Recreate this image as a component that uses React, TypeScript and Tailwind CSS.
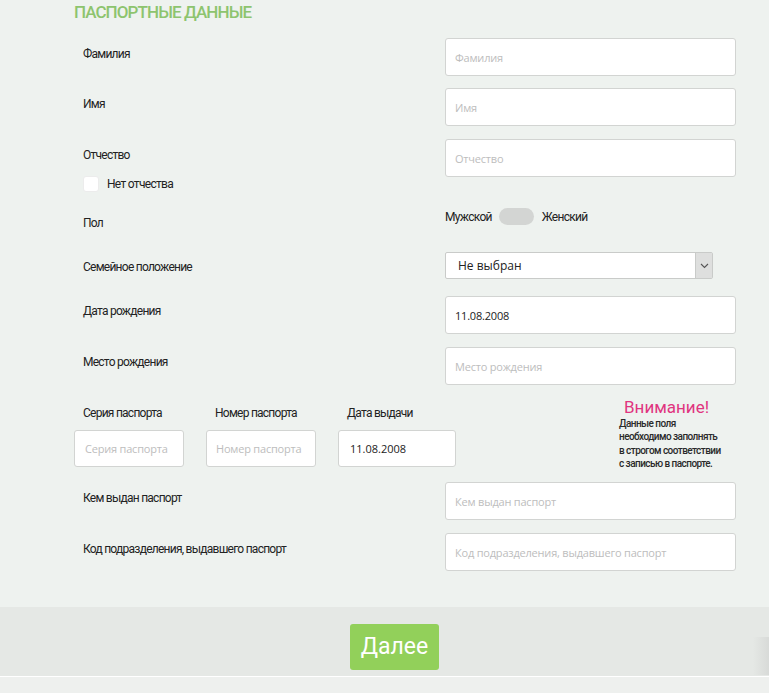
import React from "react";

const inputCls =
  "h-[38px] w-[291px] rounded-[3px] border border-[#d2d4d2] bg-white px-[9px] text-[11px] tracking-[-0.2px] outline-none placeholder:text-[#bdbdbd] text-[#222]";
const labelCls = "text-[12px] leading-4 tracking-[-0.75px] text-[#222] ml-[9px]";
const phFont = { fontFamily: '"Open Sans", "DejaVu Sans", sans-serif' };

function Row({
  label,
  placeholder,
  value,
  mt,
  pt,
}: {
  label: string;
  placeholder?: string;
  value?: string;
  mt: string;
  pt: string;
}) {
  return (
    <div className={`flex items-start ${mt}`}>
      <div className={`w-[371px] ${pt}`}>
        <div className={labelCls}>{label}</div>
      </div>
      <input
        className={inputCls}
        style={phFont}
        placeholder={placeholder}
        defaultValue={value}
      />
    </div>
  );
}

export default function App() {
  return (
    <div
      className="relative w-[769px] min-h-[693px] overflow-hidden bg-[#eef2ef]"
      style={{ fontFamily: 'Roboto, "Liberation Sans", Arial, sans-serif' }}
    >
      <div className="pl-[74px]">
        <div className="h-[24px] text-[17px] font-medium leading-[24px] tracking-[-0.9px] text-[#8dc46e]">
          ПАСПОРТНЫЕ ДАННЫЕ
        </div>

        <Row label="Фамилия" placeholder="Фамилия" mt="mt-[14px]" pt="pt-[8px]" />
        <Row label="Имя" placeholder="Имя" mt="mt-[12px]" pt="pt-[8px]" />

        <div className="mt-[13px] flex items-start">
          <div className="w-[371px] pt-[8px]">
            <div className={labelCls}>Отчество</div>
            <div className="mt-[13px] ml-[9px] flex h-4 items-center gap-[8px]">
              <div className="h-4 w-4 rounded-[3px] border border-[#ececec] bg-white" />
              <span className="text-[12px] leading-4 tracking-[-0.7px] text-[#222]">Нет отчества</span>
            </div>
          </div>
          <input className={inputCls} style={phFont} placeholder="Отчество" />
        </div>

        <div className="mt-[16px] flex items-start">
          <div className="w-[371px] pt-[7px]">
            <div className={labelCls}>Пол</div>
          </div>
          <div className="flex h-[17px] items-center">
            <span className="text-[12px] tracking-[-0.7px] text-[#222]">Мужской</span>
            <div className="ml-[7px] h-[17px] w-[35px] rounded-full bg-[#d3d5d3]" />
            <span className="ml-[8px] text-[12px] tracking-[-0.7px] text-[#222]">Женский</span>
          </div>
        </div>

        <div className="mt-[21px] flex items-start">
          <div className="w-[371px] pt-[7px]">
            <div className={labelCls}>Семейное положение</div>
          </div>
          <div className="flex h-[27px] w-[268px] items-stretch rounded-[2px] border border-[#c9cbc9] bg-white">
            <div
              className="flex flex-1 items-center pl-[12px] text-[12px] text-[#222]"
              style={phFont}
            >
              Не выбран
            </div>
            <div className="flex w-[17px] items-center justify-center border-l border-[#c9cbc9] bg-[#dedfde]">
              <svg width="9" height="6" viewBox="0 0 9 6" fill="none">
                <path d="M1 1l3.5 3.5L8 1" stroke="#555" strokeWidth="1.1" />
              </svg>
            </div>
          </div>
        </div>

        <Row label="Дата рождения" value="11.08.2008" mt="mt-[17px]" pt="pt-[7px]" />
        <Row label="Место рождения" placeholder="Место рождения" mt="mt-[13px]" pt="pt-[7px]" />

        <div className="mt-[12px] flex items-start">
          <div className="flex gap-[22px] pt-[8px]">
            <div className="flex flex-col">
              <div className={labelCls}>Серия паспорта</div>
              <input
                className="mt-[9px] h-[37px] w-[110px] rounded-[3px] border border-[#d2d4d2] bg-white px-[10px] text-[11px] tracking-[-0.2px] outline-none placeholder:text-[#bdbdbd]"
                style={phFont}
                placeholder="Серия паспорта"
              />
            </div>
            <div className="flex flex-col">
              <div className={labelCls}>Номер паспорта</div>
              <input
                className="mt-[9px] h-[37px] w-[110px] rounded-[3px] border border-[#d2d4d2] bg-white px-[9px] text-[11px] tracking-[-0.2px] outline-none placeholder:text-[#bdbdbd]"
                style={phFont}
                placeholder="Номер паспорта"
              />
            </div>
            <div className="flex flex-col">
              <div className={labelCls}>Дата выдачи</div>
              <input
                className="mt-[9px] h-[37px] w-[118px] rounded-[3px] border border-[#d2d4d2] bg-white px-[11px] text-[11px] text-[#222] outline-none"
                style={phFont}
                defaultValue="11.08.2008"
              />
            </div>
          </div>
          <div className="ml-[163px] w-[110px]">
            <div className="pl-[5px] text-[17px] leading-[20px] text-[#e0357f]">Внимание!</div>
            <div className="text-[10px] font-medium leading-[13.3px] tracking-[-0.55px] text-[#2a2a2a]">
              Данные поля
              <br />
              необходимо заполнять
              <br />в строгом соответствии
              <br />с записью в паспорте.
            </div>
          </div>
        </div>

        <Row label="Кем выдан паспорт" placeholder="Кем выдан паспорт" mt="mt-[12px]" pt="pt-[8px]" />
        <Row
          label="Код подразделения, выдавшего паспорт"
          placeholder="Код подразделения, выдавшего паспорт"
          mt="mt-[13px]"
          pt="pt-[8px]"
        />
      </div>

      <div className="relative mt-[36px] h-[69px] bg-[#e5e8e5] pt-[17px]">
        <div className="ml-[350px] flex h-[46px] w-[89px] items-center justify-center rounded-[3px] bg-[#92d05a] text-[23px] text-white">
          Далее
        </div>
        <div className="absolute right-0 top-[30px] h-[38px] w-[16px] bg-gradient-to-r from-transparent to-[#cfd1cf] opacity-60" />
      </div>
      <div className="h-px bg-white" />
      <div className="h-[16px] bg-[#eef0ee]" />
    </div>
  );
}
